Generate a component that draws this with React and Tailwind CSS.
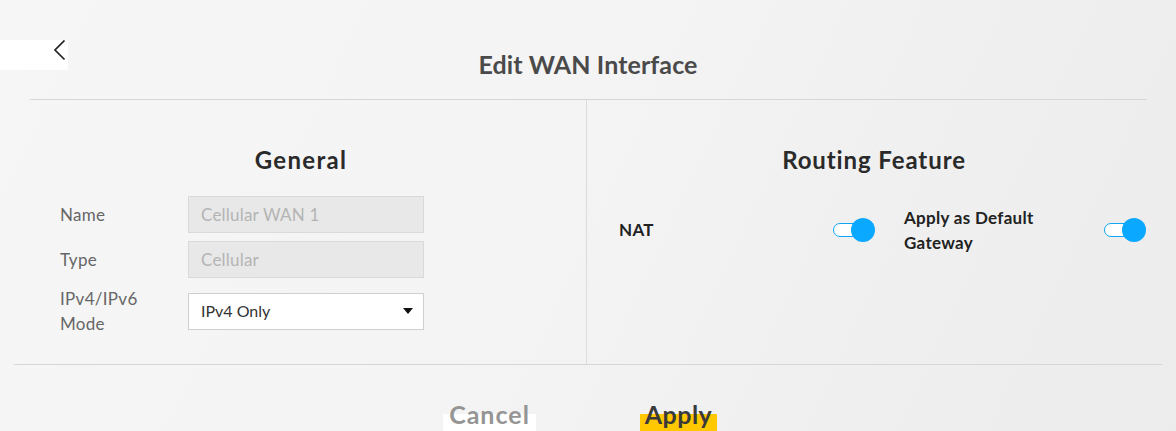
import React from "react";

function Toggle() {
  return (
    <div className="flex items-center">
      <div className="w-[30px] h-[14px] rounded-full border-[1.5px] border-[#12a5f4] bg-white" />
      <div className="w-[24px] h-[24px] rounded-full bg-[#0aa8ff] -ml-[12px]" />
    </div>
  );
}

export default function App() {
  const font = { fontFamily: "Lato, 'Liberation Sans', sans-serif" };
  return (
    <div
      className="relative w-full h-[431px] overflow-hidden bg-[linear-gradient(115deg,#f6f6f6_0%,#f4f4f4_45%,#f0f0f0_70%,#ececec_100%)]"
      style={font}
    >
      <div className="absolute left-0 top-[40px] w-[68px] h-[30px] bg-white flex items-start justify-end pr-[1px]">
        <svg width="14" height="22" viewBox="0 0 14 22">
          <path d="M11.5 0.5 L2 10 L11.5 19.5" fill="none" stroke="#222" strokeWidth="1.7" />
        </svg>
      </div>

      <div className="pt-[49px] h-[99px] text-center">
        <h1 className="text-[25px] leading-[30px] font-bold text-[#4a4a4a] tracking-[0.1px]">Edit WAN Interface</h1>
      </div>

      <div className="mx-[30px] mr-[29px] border-t border-[#d6d6d6] flex h-[265px]">
        <div className="w-[557px] border-r border-[#dcdcdc] pr-[14px]">
          <h2 className="pt-[45px] text-center text-[24px] leading-[30px] font-bold text-[#2a2a2a] tracking-[1.3px]">General</h2>
          <div className="mt-[21px] pl-[30px] flex flex-col gap-[8px] text-[17px]">
            <div className="flex items-center h-[37px]">
              <div className="w-[128px] text-[#666] tracking-[0.3px]">Name</div>
              <div className="w-[236px] h-[37px] bg-[#e8e8e8] border border-[#d9d9d9] pl-[12px] flex items-center text-[#b4b4b4] tracking-[0.2px]">
                Cellular WAN 1
              </div>
            </div>
            <div className="flex items-center h-[37px]">
              <div className="w-[128px] text-[#666] tracking-[0.3px]">Type</div>
              <div className="w-[236px] h-[37px] bg-[#e8e8e8] border border-[#d9d9d9] pl-[12px] flex items-center text-[#b4b4b4] tracking-[0.2px]">
                Cellular
              </div>
            </div>
            <div className="flex items-center h-[50px]">
              <div className="w-[128px] text-[#666] leading-[25px] tracking-[0.3px]">
                IPv4/IPv6
                <br />
                Mode
              </div>
              <div className="w-[236px] h-[37px] bg-white border border-[#cfcfcf] pl-[12px] pr-[10px] flex items-center justify-between text-[#333] text-[16px]">
                <span>IPv4 Only</span>
                <svg width="10" height="6" viewBox="0 0 10 6">
                  <path d="M0 0 H10 L5 6 Z" fill="#111" />
                </svg>
              </div>
            </div>
          </div>
        </div>
        <div className="flex-1 pl-[14px]">
          <h2 className="pt-[45px] text-center text-[24px] leading-[30px] font-bold text-[#2a2a2a] tracking-[0.9px]">Routing Feature</h2>
          <div className="mt-[30px] pl-[18px] flex items-center h-[50px] text-[17px] font-bold text-[#222] tracking-[0.3px]">
            <div className="w-[256px] flex items-center justify-between">
              <span>NAT</span>
              <Toggle />
            </div>
            <div className="ml-[29px] flex-1 flex items-center justify-between pr-[1px]">
              <span className="leading-[25px]">
                Apply as Default
                <br />
                Gateway
              </span>
              <Toggle />
            </div>
          </div>
        </div>
      </div>

      <div className="mx-[14px] border-t border-[#d6d6d6]" />

      <div className="flex justify-center pr-[16px] pt-[49px] gap-[104px]">
        <div className="w-[93px] h-[40px] bg-white flex justify-center">
          <span className="block -mt-[15px] text-[25px] leading-[30px] font-bold text-[#959595] tracking-[1px]">Cancel</span>
        </div>
        <div className="w-[77px] h-[40px] bg-[#ffc800] flex justify-center">
          <span className="block -mt-[15px] text-[25px] leading-[30px] font-bold text-[#3a3a3a] tracking-[0.5px]">Apply</span>
        </div>
      </div>
    </div>
  );
}
